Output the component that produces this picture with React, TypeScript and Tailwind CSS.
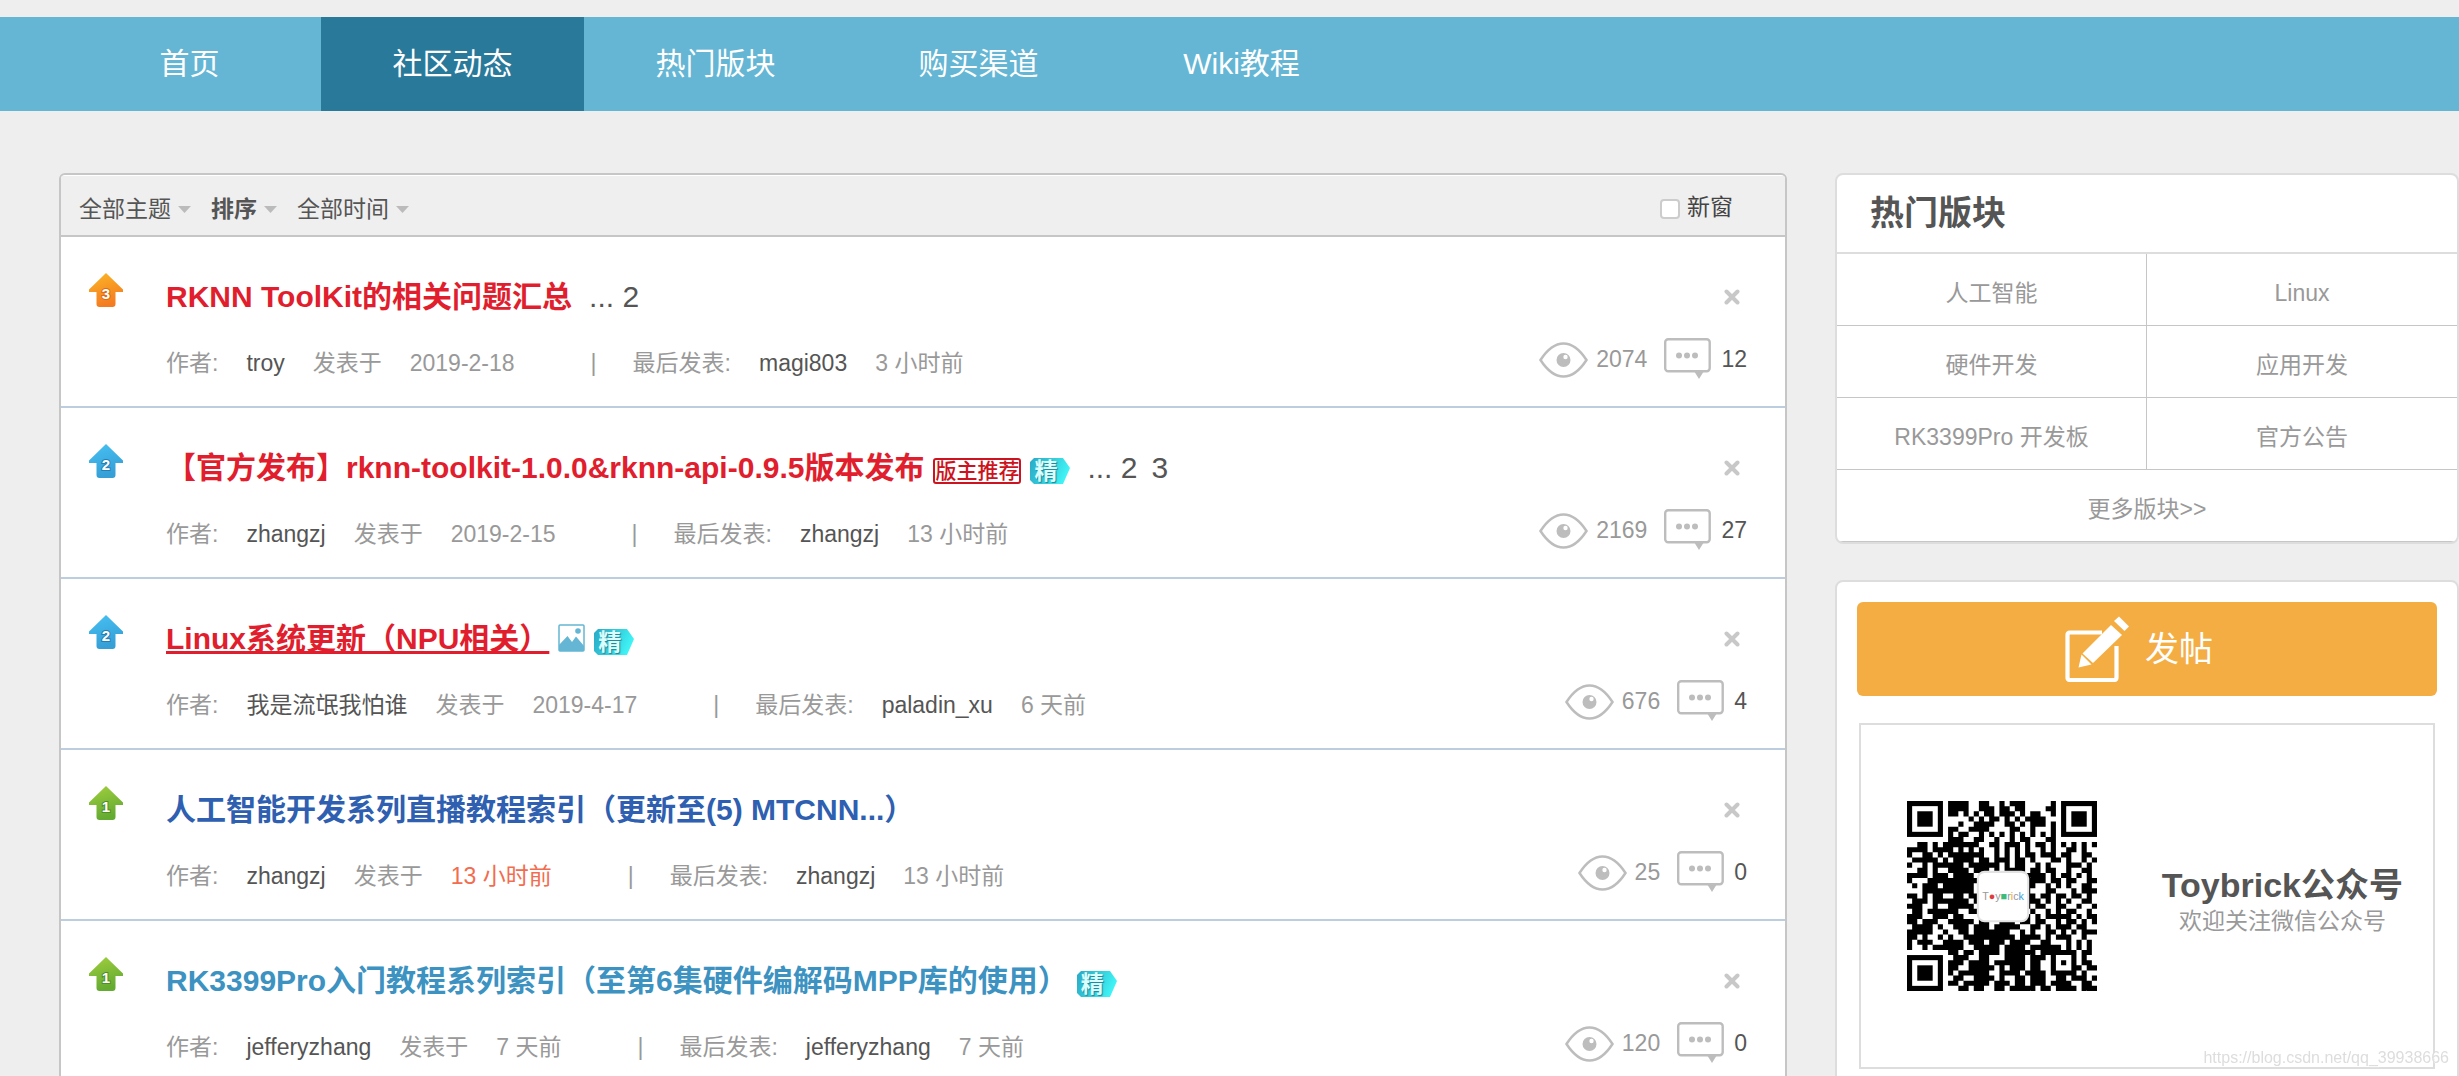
import React from "react";

const QR_ROWS = [
  "........####..##..#.###.....#........",
  "........####..###.##.##....##........",
  "........##.#.#.##.###.#.##..#........",
  "............#.#.##.#.#.####..........",
  "..........#..####..##.#.###.#........",
  "........##..####....##..#...#........",
  "........#.##..#.#.#.#.#.#.#.#........",
  "........###..##..#..#.##...##........",
  "..##.#.#######..##.###.#.##.#.#.#.#.#",
  "####.####.#.#.#..#.#.#.#..#.#..##.#..",
  "#..##.#.#######..#.#.#.##.###.##..##.",
  ".#####.#.####.##.###.##.#...##.#..#.#",
  "#..#.######.######.#.##..#.#...###.#.",
  "..##.#..####.###.#.####.##.##..#..##.",
  "####.###.####.#........####.#.##.#.#.",
  "#...##########.........####.##.##..##",
  ".#.###.######..........##..#.#.#..##.",
  "...##########..........#...##...#.###",
  "##.#.##..##.##.........##.##.##.##.#.",
  ".###.#######.#.........###.#.#.#..##.",
  "###..#..#####..........#.##..##..#..#",
  ".##.######..##..........#..#.#.##..#.",
  "###..###.##...........##.#.#####.#.##",
  "##.###..#####.##..###.##.##..#.##.#.#",
  ".####.#..###.###.#####..##.#.###.##..",
  "#####..#..##.#######..#.#..##.#.#.###",
  "##.#..#.#..##########.####.#.###..#..",
  "#.###..####.###.###.####..##...#.#.#.",
  "#..#.######..#####.####.######.#.#.#.",
  "........##.##.####.######.#######.##.",
  ".........###..##...####.###.#...#.#..",
  "........###.####.######.##..#.#.#.##.",
  "........##..#####.#.###.##..#...##.##",
  "........#.######..####.####.#####.#..",
  ".........##..####.#..##.###..##.###.#",
  "........##.#####.###.##.###.####..##.",
  "..........##.##..##.#####.##.####.###",
];

const sections = [
  { label: "首页" },
  { label: "社区动态", active: true },
  { label: "热门版块" },
  { label: "购买渠道" },
  { label: "Wiki教程" },
];

const boards = ["人工智能", "Linux", "硬件开发", "应用开发", "RK3399Pro 开发板", "官方公告"];

type Tag = "recommend" | "digest" | "image";

interface Thread {
  level: 1 | 2 | 3;
  title: string;
  tone: string;
  tags: Tag[];
  pages: string[];
  author: string;
  date: string;
  fresh?: boolean;
  lastBy: string;
  lastAt: string;
  views: number;
  replies: number;
}

const threads: Thread[] = [
  { level: 3, title: "RKNN ToolKit的相关问题汇总", tone: "text-[#e11e2d]", tags: [], pages: ["2"], author: "troy", date: "2019-2-18", lastBy: "magi803", lastAt: "3 小时前", views: 2074, replies: 12 },
  { level: 2, title: "【官方发布】rknn-toolkit-1.0.0&rknn-api-0.9.5版本发布", tone: "text-[#e11e2d]", tags: ["recommend", "digest"], pages: ["2", "3"], author: "zhangzj", date: "2019-2-15", lastBy: "zhangzj", lastAt: "13 小时前", views: 2169, replies: 27 },
  { level: 2, title: "Linux系统更新（NPU相关）", tone: "text-[#e11e2d] underline decoration-[3px] underline-offset-2", tags: ["image", "digest"], pages: [], author: "我是流氓我怕谁", date: "2019-4-17", lastBy: "paladin_xu", lastAt: "6 天前", views: 676, replies: 4 },
  { level: 1, title: "人工智能开发系列直播教程索引（更新至(5) MTCNN...）", tone: "text-[#2f5fb0]", tags: [], pages: [], author: "zhangzj", date: "13 小时前", fresh: true, lastBy: "zhangzj", lastAt: "13 小时前", views: 25, replies: 0 },
  { level: 1, title: "RK3399Pro入门教程系列索引（至第6集硬件编解码MPP库的使用）", tone: "text-[#3c92c1]", tags: ["digest"], pages: [], author: "jefferyzhang", date: "7 天前", lastBy: "jefferyzhang", lastAt: "7 天前", views: 120, replies: 0 },
];

const arrowColors = {
  1: ["#a2cf3e", "#64ab32", "#4f8f28"],
  2: ["#47c1f3", "#359fd6", "#2380b4"],
  3: ["#fbb726", "#f47c20", "#dd6a12"],
} as const;

function PinArrow({ level }: { level: 1 | 2 | 3 }) {
  const [from, to, edge] = arrowColors[level];
  const id = `pin-${level}`;
  return (
    <svg className="mt-9 h-[34px] w-[34px] shrink-0" viewBox="0 0 34 34" aria-label={`置顶 ${level}`}>
      <defs>
        <linearGradient id={id} x1="0" y1="0" x2="0.3" y2="1">
          <stop offset="0" stopColor={from} />
          <stop offset="1" stopColor={to} />
        </linearGradient>
      </defs>
      <path d="M17 0 L34 16.500 V19 H26.500 V31 Q26.500 34 23.500 34 H10.500 Q7.500 34 7.500 31 V19 H0 V16.500 Z" fill={`url(#${id})`} />
      <text x="17" y="26" textAnchor="middle" className="font-['Liberation_Sans'] text-[15px] font-bold" fill="#fff" stroke={edge} strokeWidth="2" paintOrder="stroke">
        {level}
      </text>
    </svg>
  );
}

function DigestBadge() {
  return (
    <span className="relative inline-flex h-[26px] w-[40px] items-center">
      <svg className="absolute inset-0 h-full w-full" viewBox="0 0 40 26" aria-hidden="true">
        <defs>
          <linearGradient id="digest" x1="0" y1="0" x2="1" y2="0.3">
            <stop offset="0" stopColor="#2ba9c6" />
            <stop offset="0.600" stopColor="#35d0dc" />
            <stop offset="1" stopColor="#3ff3f5" />
          </linearGradient>
        </defs>
        <path d="M4 0 H33 L40 10 L33 26 H4 L0 22 V4 Z" fill="url(#digest)" />
      </svg>
      <span className="relative pl-[4px] text-[23px] leading-[26px] font-bold text-[#d9ffff] [text-shadow:1px_1px_1px_#1d8299]">精</span>
    </span>
  );
}

function RecommendBadge() {
  return (
    <span className="flex h-[26px] items-center rounded-[3px] border-2 border-[#cc1420] text-[21px] leading-[22px] font-medium text-[#cc1420]">
      版主推荐
    </span>
  );
}

function ImageBadge() {
  return (
    <svg className="mb-[3px] h-[28px] w-[27px]" viewBox="0 0 27 28" aria-label="图片">
      <rect x="1" y="1" width="25" height="26" rx="1" fill="#fff" stroke="#64b6d4" strokeWidth="1.500" />
      <path d="M1 21 L9.500 12 L14 18 L18 12.500 L26 22 V27 H1 Z" fill="#64b6d4" />
      <circle cx="20" cy="7" r="2.800" fill="#64b6d4" />
    </svg>
  );
}

function EyeIcon() {
  return (
    <svg className="mt-[2px] h-[36px] w-[49px]" viewBox="0 0 49 36" aria-label="查看">
      <path d="M1.500 18 C8 8 15 1.500 24.500 1.500 C34 1.500 41 8 47.500 18 C41 28 34 34.500 24.500 34.500 C15 34.500 8 28 1.500 18 Z" fill="none" stroke="#bdbdbd" strokeWidth="2.500" />
      <circle cx="24.500" cy="18" r="7" fill="#bdbdbd" />
      <circle cx="26.500" cy="15" r="2.200" fill="#fff" />
    </svg>
  );
}

function CommentIcon() {
  return (
    <svg className="h-[41px] w-[47px]" viewBox="0 0 47 41" aria-label="回复">
      <rect x="1.200" y="1.200" width="44.500" height="32" rx="3" fill="none" stroke="#bdbdbd" strokeWidth="2.400" />
      <path d="M30 33 H40 L35 41 Z" fill="#bdbdbd" />
      <circle cx="15" cy="17.500" r="3" fill="#bdbdbd" />
      <circle cx="23" cy="17.500" r="3" fill="#bdbdbd" />
      <circle cx="31" cy="17.500" r="3" fill="#bdbdbd" />
    </svg>
  );
}

function ThreadRow({ thread }: { thread: Thread }) {
  return (
    <li className="flex items-start border-b-2 border-[#bccddf] pr-[38px] pl-7">
      <PinArrow level={thread.level} />
      <div className="min-w-0 flex-1 pt-9 pb-[27px] pl-[43px]">
        <div className="flex items-center gap-[9px] text-[30px] leading-[48px] whitespace-nowrap">
          <a href="#" className={`font-bold ${thread.tone}`}>{thread.title}</a>
          {thread.tags.length > 0 && (
            <span className="flex h-[32px] items-end gap-[9px]">
              {thread.tags.map((tag) =>
                tag === "recommend" ? <RecommendBadge key={tag} /> : tag === "digest" ? <DigestBadge key={tag} /> : <ImageBadge key={tag} />
              )}
            </span>
          )}
          {thread.pages.length > 0 && (
            <span className="flex gap-[14px] pl-2 text-[#555]">
              <span>
                ... <a href="#">{thread.pages[0]}</a>
              </span>
              {thread.pages.slice(1).map((page) => (
                <a key={page} href="#">{page}</a>
              ))}
            </span>
          )}
        </div>
        <div className="mt-[26px] flex gap-7 text-[23px] leading-8 whitespace-nowrap text-[#999]">
          <span>作者:</span>
          <a href="#" className="text-[#555]">{thread.author}</a>
          <span>发表于</span>
          <span className={thread.fresh ? "text-[#f26c4f]" : ""}>{thread.date}</span>
          <span className="pr-2 pl-12">|</span>
          <span>最后发表:</span>
          <a href="#" className="text-[#555]">{thread.lastBy}</a>
          <a href="#">{thread.lastAt}</a>
        </div>
      </div>
      <div className="flex flex-col items-end pt-9">
        <button type="button" aria-label="隐藏置顶帖" className="mr-[7px] flex h-12 items-center">
          <svg className="h-4 w-4" viewBox="0 0 16 16" aria-hidden="true">
            <path d="M2.500 2.500 L13.500 13.500 M13.500 2.500 L2.500 13.500" stroke="#c8c8c8" strokeWidth="4" strokeLinecap="round" />
          </svg>
        </button>
        <div className="mt-[17px] flex items-center text-[23px] leading-8">
          <EyeIcon />
          <span className="pl-2 text-[#999]">{thread.views}</span>
          <span className="pl-[17px]">
            <CommentIcon />
          </span>
          <a href="#" className="pl-[10px] text-[#555]">{thread.replies}</a>
        </div>
      </div>
    </li>
  );
}

function Filter({ label, strong }: { label: string; strong?: boolean }) {
  return (
    <button type="button" className={`flex items-center gap-[7px] ${strong ? "font-bold" : ""}`}>
      {label}
      <svg className="h-[7px] w-[13px]" viewBox="0 0 13 7" aria-hidden="true">
        <path d="M0 0 H13 L6.500 7 Z" fill="#bbb" />
      </svg>
    </button>
  );
}

function Finder({ x, y }: { x: number; y: number }) {
  return (
    <g>
      <rect x={x} y={y} width="7" height="7" fill="#000" />
      <rect x={x + 1} y={y + 1} width="5" height="5" fill="#fff" />
      <rect x={x + 2} y={y + 2} width="3" height="3" fill="#000" />
    </g>
  );
}

function QrCode() {
  const cells = QR_ROWS.flatMap((row, y) =>
    [...row].map((cell, x) => (cell === "#" ? `M${x} ${y}h1v1h-1z` : ""))
  ).join("");
  return (
    <svg className="h-[190px] w-[190px]" viewBox="0 0 37 37" aria-label="Toybrick公众号二维码">
      <path d={cells} fill="#000" />
      <Finder x={0} y={0} />
      <Finder x={30} y={0} />
      <Finder x={0} y={30} />
      <rect x="13.800" y="13.800" width="9.800" height="9.600" rx="1.300" fill="#fff" stroke="#e2e2e2" strokeWidth="0.400" />
      <text x="18.700" y="19.300" textAnchor="middle" fontSize="2.100" className="font-['Liberation_Sans']" fill="#999">
        T<tspan fill="#e23b3b">●</tspan>y<tspan fill="#3dbb7c">■</tspan>r<tspan fill="#f0a830">i</tspan>c<tspan fill="#3c9fd6">k</tspan>
      </text>
    </svg>
  );
}

function ComposeIcon() {
  return (
    <svg className="h-[66px] w-[64px]" viewBox="0 0 64 66" aria-hidden="true">
      <path d="M37 16.500 H5 Q2.500 16.500 2.500 19 V61.500 Q2.500 64 5 64 H49 Q51.500 64 51.500 61.500 V30" fill="none" stroke="#fff" strokeWidth="4.200" />
      <path d="M46 9 L57 19 L28 47 L17.500 37.500 Z" fill="#fff" />
      <path d="M49 5 L54 0.500 L64 10.500 L59.500 15 Z" fill="#fff" />
      <path d="M16.500 38.500 L26.500 48.500 L13.500 51.500 Z" fill="#fff" />
    </svg>
  );
}

export default function App() {
  return (
    <div className="h-screen overflow-hidden bg-[#eee] pt-[17px] font-['Liberation_Sans','Noto_Sans_CJK_SC',sans-serif]">
      <nav className="flex bg-[#64b6d4] pl-[58px]">
        {sections.map((item) => (
          <a
            key={item.label}
            href="#"
            className={`w-[263px] py-[23px] text-center text-[30px] leading-[48px] text-white ${item.active ? "bg-[#29799b]" : ""}`}
          >
            {item.label}
          </a>
        ))}
      </nav>

      <div className="mt-[62px] flex items-start gap-12 pl-[59px]">
        <main className="min-w-0 flex-1 overflow-hidden rounded-md border-2 border-[#c6c6c6] bg-white">
          <div className="mt-px flex items-center justify-between border-b-2 border-[#c6c6c6] bg-[#efefef] pt-3 pr-[52px] pb-[9px] pl-[18px] text-[23px] leading-[34px] text-[#555]">
            <div className="flex items-center gap-5 pt-1">
              <Filter label="全部主题" />
              <Filter label="排序" strong />
              <Filter label="全部时间" />
            </div>
            <label className="flex items-center gap-[7px] text-[#444]">
              <input type="checkbox" className="mt-1 h-5 w-5 appearance-none rounded border-2 border-[#ccc] bg-white checked:bg-[#64b6d4]" />
              新窗
            </label>
          </div>
          <ul>
            {threads.map((thread) => (
              <ThreadRow key={thread.title} thread={thread} />
            ))}
          </ul>
        </main>

        <aside className="flex w-[624px] shrink-0 flex-col gap-[36px]">
          <section className="overflow-hidden rounded-lg border-2 border-[#ddd] bg-white">
            <h2 className="border-b-2 border-[#ddd] pt-[14px] pb-[15px] pl-[33px] text-[34px] leading-[48px] font-bold text-[#555]">热门版块</h2>
            <div className="grid grid-cols-2 text-center text-[23px] leading-8 text-[#999]">
              {boards.map((board) => (
                <a key={board} href="#" className="border-b border-[#c6c6c6] pt-[23px] pb-4 odd:border-r">
                  {board}
                </a>
              ))}
              <a href="#" className="col-span-2 border-b border-[#c6c6c6] pt-[23px] pb-4">更多版块&gt;&gt;</a>
            </div>
          </section>

          <section className="rounded-lg border-2 border-[#ddd] bg-white px-5 pt-5 pb-10">
            <button type="button" className="flex w-full items-center justify-center gap-4 rounded-md bg-[#f4ad43] py-[14px] pr-4 text-[34px] leading-[48px] text-white">
              <ComposeIcon />
              发帖
            </button>
            <div className="mx-[2px] mt-[27px] flex items-center justify-between border-2 border-[#ddd] py-[76px] pr-[30px] pl-[46px]">
              <QrCode />
              <div className="pt-[10px] text-center">
                <div className="text-[34px] leading-[40px] font-bold text-[#555]">Toybrick公众号</div>
                <div className="text-[23px] leading-8 text-[#999]">欢迎关注微信公众号</div>
              </div>
            </div>
          </section>
        </aside>
      </div>

      <div className="fixed right-[10px] bottom-[6px] text-[16px] leading-6 text-[#ddd] [text-shadow:1px_1px_0_#fff]">https://blog.csdn.net/qq_39938666</div>
    </div>
  );
}
